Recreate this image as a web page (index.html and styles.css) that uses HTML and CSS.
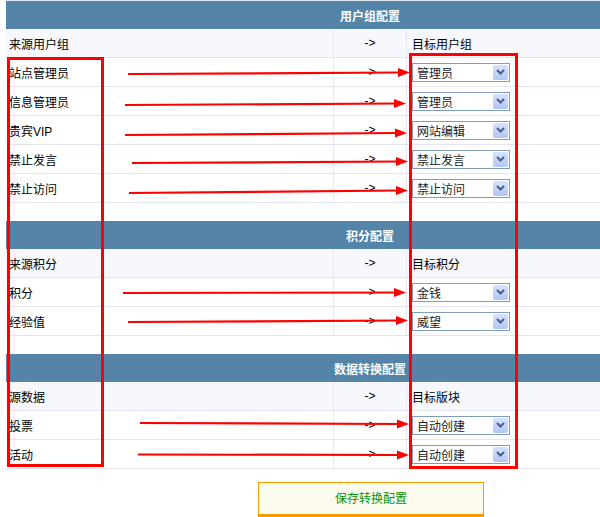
FILE: index.html
```html
<!DOCTYPE html>
<html lang="zh-CN">
<head>
<meta charset="utf-8">
<title>转换配置</title>
<link rel="stylesheet" href="styles.css">
</head>
<body>
<div class="page">
  <div class="sheet">
    <div class="row head"><div></div><div class="mid">用户组配置</div><div></div></div>
    <div class="row label"><div class="c1">来源用户组</div><div class="c2">-&gt;</div><div class="c3">目标用户组</div></div>
    <div class="row"><div class="c1">站点管理员</div><div class="c2">-&gt;</div><div class="c3"><div class="select"><span>管理员</span><i class="btn"><svg width="9" height="6" viewBox="0 0 9 6"><path d="M1 1 L4.5 4.5 L8 1" fill="none" stroke="#4a5f88" stroke-width="2"/></svg></i></div></div></div>
    <div class="row"><div class="c1">信息管理员</div><div class="c2">-&gt;</div><div class="c3"><div class="select"><span>管理员</span><i class="btn"><svg width="9" height="6" viewBox="0 0 9 6"><path d="M1 1 L4.5 4.5 L8 1" fill="none" stroke="#4a5f88" stroke-width="2"/></svg></i></div></div></div>
    <div class="row"><div class="c1">贵宾VIP</div><div class="c2">-&gt;</div><div class="c3"><div class="select"><span>网站编辑</span><i class="btn"><svg width="9" height="6" viewBox="0 0 9 6"><path d="M1 1 L4.5 4.5 L8 1" fill="none" stroke="#4a5f88" stroke-width="2"/></svg></i></div></div></div>
    <div class="row"><div class="c1">禁止发言</div><div class="c2">-&gt;</div><div class="c3"><div class="select"><span>禁止发言</span><i class="btn"><svg width="9" height="6" viewBox="0 0 9 6"><path d="M1 1 L4.5 4.5 L8 1" fill="none" stroke="#4a5f88" stroke-width="2"/></svg></i></div></div></div>
    <div class="row"><div class="c1">禁止访问</div><div class="c2">-&gt;</div><div class="c3"><div class="select"><span>禁止访问</span><i class="btn"><svg width="9" height="6" viewBox="0 0 9 6"><path d="M1 1 L4.5 4.5 L8 1" fill="none" stroke="#4a5f88" stroke-width="2"/></svg></i></div></div></div>
    <div class="blank"></div>

    <div class="row head"><div></div><div class="mid">积分配置</div><div></div></div>
    <div class="row label"><div class="c1">来源积分</div><div class="c2">-&gt;</div><div class="c3">目标积分</div></div>
    <div class="row"><div class="c1">积分</div><div class="c2">-&gt;</div><div class="c3"><div class="select"><span>金钱</span><i class="btn"><svg width="9" height="6" viewBox="0 0 9 6"><path d="M1 1 L4.5 4.5 L8 1" fill="none" stroke="#4a5f88" stroke-width="2"/></svg></i></div></div></div>
    <div class="row"><div class="c1">经验值</div><div class="c2">-&gt;</div><div class="c3"><div class="select"><span>威望</span><i class="btn"><svg width="9" height="6" viewBox="0 0 9 6"><path d="M1 1 L4.5 4.5 L8 1" fill="none" stroke="#4a5f88" stroke-width="2"/></svg></i></div></div></div>
    <div class="blank"></div>

    <div class="row head"><div></div><div class="mid">数据转换配置</div><div></div></div>
    <div class="row label"><div class="c1">源数据</div><div class="c2">-&gt;</div><div class="c3">目标版块</div></div>
    <div class="row"><div class="c1">投票</div><div class="c2">-&gt;</div><div class="c3"><div class="select"><span>自动创建</span><i class="btn"><svg width="9" height="6" viewBox="0 0 9 6"><path d="M1 1 L4.5 4.5 L8 1" fill="none" stroke="#4a5f88" stroke-width="2"/></svg></i></div></div></div>
    <div class="row"><div class="c1">活动</div><div class="c2">-&gt;</div><div class="c3"><div class="select"><span>自动创建</span><i class="btn"><svg width="9" height="6" viewBox="0 0 9 6"><path d="M1 1 L4.5 4.5 L8 1" fill="none" stroke="#4a5f88" stroke-width="2"/></svg></i></div></div></div>
  </div>

  <div class="actions"><button class="save" type="button">保存转换配置</button></div>

  <svg class="marks" width="600" height="517" viewBox="0 0 600 517">
    <g fill="none" stroke="#ff0000" stroke-width="3">
      <rect x="8.5" y="58.5" width="94" height="407"/>
      <rect x="410.5" y="54.5" width="106" height="413"/>
    </g>
    <g stroke="#ff0000" stroke-width="2.2" fill="none">
      <line x1="128" y1="74" x2="400" y2="72.5"/>
      <line x1="125" y1="105" x2="396" y2="103.5"/>
      <line x1="125" y1="135" x2="397" y2="133"/>
      <line x1="132" y1="163" x2="398" y2="161.5"/>
      <line x1="129" y1="193" x2="398" y2="190.5"/>
      <line x1="123" y1="293" x2="396" y2="292.5"/>
      <line x1="128" y1="322" x2="398" y2="320.5"/>
      <line x1="140" y1="423" x2="399" y2="424"/>
      <line x1="138" y1="454.5" x2="399" y2="455"/>
    </g>
    <g fill="#ff0000">
      <polygon points="410,72.5 398,68 398,77"/>
      <polygon points="406,103.5 394,99 394,108"/>
      <polygon points="407,133 395,128.5 395,137.5"/>
      <polygon points="408,161.5 396,157 396,166"/>
      <polygon points="408,190.5 396,186 396,195"/>
      <polygon points="406,292.5 394,288 394,297"/>
      <polygon points="408,320.5 396,316 396,325"/>
      <polygon points="409,424 397,419.5 397,428.5"/>
      <polygon points="409,455 397,450.5 397,459.5"/>
    </g>
  </svg>
</div>
</body>
</html>
```

FILE: styles.css
```css
html, body {
  margin: 0;
  padding: 0;
  background: #ffffff;
}

body {
  font-family: "Liberation Sans", "Noto Sans CJK SC", sans-serif;
  font-size: 12px;
  color: #000000;
}

.page {
  position: relative;
  width: 600px;
  height: 517px;
  overflow: hidden;
}

.sheet {
  margin-left: 6px;
  width: 594px;
  border-top: 1px solid #dfe5ef;
}

.row {
  display: grid;
  grid-template-columns: 327px 74px 193px;
  height: 29px;
  box-sizing: border-box;
  border-bottom: 1px solid #e3e3f1;
  background: #ffffff;
}

.row.label {
  background: #f7f7fe;
}

.row.head {
  height: 28px;
  border-bottom: none;
  background: #5485a9;
  color: #ffffff;
  font-weight: bold;
}

.blank {
  height: 18px;
}

.c1, .c2, .c3, .mid {
  display: flex;
  align-items: center;
}

.c1 {
  padding-left: 3px;
}

.c2 {
  justify-content: center;
  box-sizing: border-box;
  border-left: 1px solid #e8e8f3;
  border-right: 1px solid #e8e8f3;
}

.mid {
  justify-content: center;
  white-space: nowrap;
}

.c3 {
  padding-left: 5px;
}

.select {
  display: flex;
  align-items: center;
  justify-content: space-between;
  width: 98px;
  height: 19px;
  box-sizing: border-box;
  border: 1px solid #7f9db9;
  background: #ffffff;
  padding-left: 4px;
  color: #222222;
}

.btn {
  display: flex;
  align-items: center;
  justify-content: center;
  width: 15px;
  height: 15px;
  margin-right: 1px;
  border-radius: 2px;
  background: linear-gradient(#d6e2fd, #b3c6f4);
}

.actions {
  display: flex;
  padding-left: 258px;
  padding-top: 13px;
}

.save {
  width: 226px;
  height: 36px;
  box-sizing: border-box;
  margin: 0;
  padding: 0 0 2px 0;
  background: #fdfaee;
  border: 1px solid #ff9900;
  border-bottom-width: 4px;
  color: #079307;
  font-family: "Liberation Sans", "Noto Sans CJK SC", sans-serif;
  font-size: 12px;
}

.marks {
  position: absolute;
  left: 0;
  top: 0;
  pointer-events: none;
}
```
